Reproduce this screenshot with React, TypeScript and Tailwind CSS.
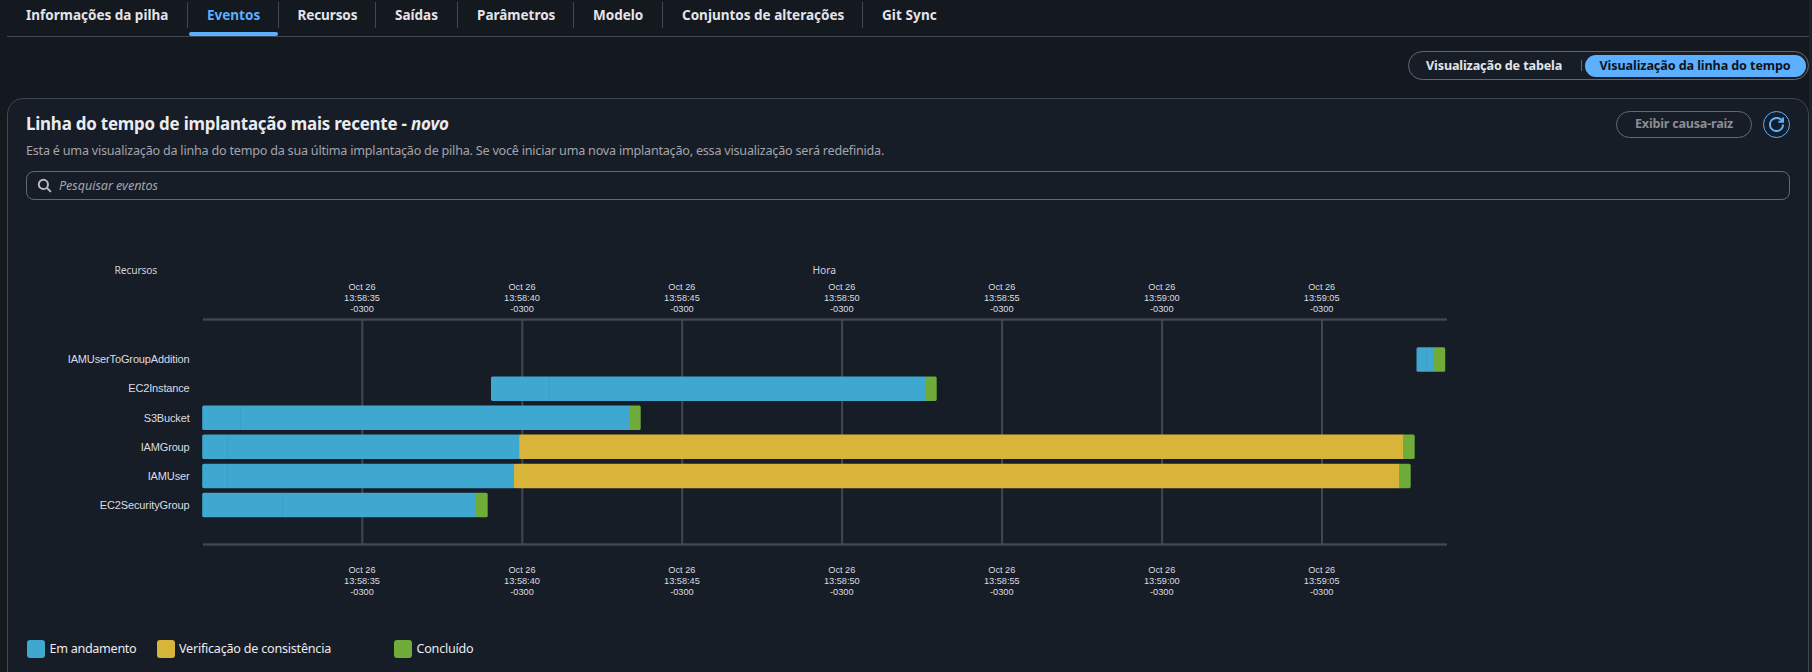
import React from "react";

const BLUE = "#3ea8d0";
const YELLOW = "#d8b538";
const GREEN = "#6fac3a";
const GRID = "#424650";

type Tab = { label: string; width: string; active?: boolean };

const tabs: Tab[] = [
  { label: "Informações da pilha", width: "w-[181px] pl-[19px]" },
  { label: "Eventos", width: "w-[91px] pl-[19px]", active: true },
  { label: "Recursos", width: "w-[97px] pl-[18.5px] tracking-[-0.1px]" },
  { label: "Saídas", width: "w-[82px] pl-[19px]" },
  { label: "Parâmetros", width: "w-[116px] pl-[19px]" },
  { label: "Modelo", width: "w-[89px] pl-[19px]" },
  { label: "Conjuntos de alterações", width: "w-[200px] pl-[19px]" },
  { label: "Git Sync", width: "w-[95px] pl-[19px] tracking-[0.1px]" },
];

const ticks = [
  { x: 362.3, time: "13:58:35" },
  { x: 522.3, time: "13:58:40" },
  { x: 682.2, time: "13:58:45" },
  { x: 842.1, time: "13:58:50" },
  { x: 1002.1, time: "13:58:55" },
  { x: 1162.1, time: "13:59:00" },
  { x: 1322, time: "13:59:05" },
];

type Segment = { from: number; to: number; color: string };
type Row = { name: string; labelWidth: number; split: number; segments: Segment[] };

const rows: Row[] = [
  {
    name: "IAMUserToGroupAddition",
    labelWidth: 122,
    split: 1426,
    segments: [
      { from: 1416.5, to: 1433.5, color: BLUE },
      { from: 1433.5, to: 1445.2, color: GREEN },
    ],
  },
  {
    name: "EC2Instance",
    labelWidth: 61.5,
    split: 549,
    segments: [
      { from: 491, to: 925, color: BLUE },
      { from: 925, to: 936.7, color: GREEN },
    ],
  },
  {
    name: "S3Bucket",
    labelWidth: 46,
    split: 240,
    segments: [
      { from: 202.2, to: 629, color: BLUE },
      { from: 629, to: 640.7, color: GREEN },
    ],
  },
  {
    name: "IAMGroup",
    labelWidth: 49,
    split: 227,
    segments: [
      { from: 202.2, to: 519.3, color: BLUE },
      { from: 519.3, to: 1403, color: YELLOW },
      { from: 1403, to: 1414.7, color: GREEN },
    ],
  },
  {
    name: "IAMUser",
    labelWidth: 42,
    split: 227,
    segments: [
      { from: 202.2, to: 514, color: BLUE },
      { from: 514, to: 1399, color: YELLOW },
      { from: 1399, to: 1410.7, color: GREEN },
    ],
  },
  {
    name: "EC2SecurityGroup",
    labelWidth: 90,
    split: 282,
    segments: [
      { from: 202.2, to: 476, color: BLUE },
      { from: 476, to: 487.7, color: GREEN },
    ],
  },
];

function TickLabel({ x, y, time }: { x: number; y: number; time: string }) {
  return (
    <g textAnchor="middle" fontSize="9.2" fill="#dcdce2">
      <text x={x} y={y}>Oct 26</text>
      <text x={x} y={y + 11}>{time}</text>
      <text x={x} y={y + 21.7}>-0300</text>
    </g>
  );
}

function TimelineChart() {
  return (
    <svg
      viewBox="8 200 1500 421"
      width="1500"
      height="421"
      className="block shrink-0 font-['Liberation_Sans',Arial,sans-serif]"
    >
      <text x="114.5" y="274" fontSize="10.3" fill="#d0d0d6" textLength="42.8" className="font-['Noto_Sans',sans-serif]">
        Recursos
      </text>
      <text x="812.5" y="274" fontSize="10.3" fill="#d0d0d6" textLength="23.5" className="font-['Noto_Sans',sans-serif]">
        Hora
      </text>
      {ticks.map((t) => (
        <g key={t.time}>
          <TickLabel x={t.x - 0.3} y={290} time={t.time} />
          <rect x={t.x - 1} y="320" width="2" height="224" fill={GRID} />
          <TickLabel x={t.x - 0.3} y={573} time={t.time} />
        </g>
      ))}
      <rect x="203" y="318.3" width="1244" height="2.4" fill={GRID} />
      <rect x="203" y="543.3" width="1244" height="2.4" fill={GRID} />
      {rows.map((row, i) => {
        const y = 347.3 + i * 29.1;
        return (
          <g key={row.name}>
            <text
              x={189.7 - row.labelWidth}
              y={363.2 + i * 29.15}
              fontSize="11"
              textLength={row.labelWidth}
              fill="#dcdce2"
            >
              {row.name}
            </text>
            {row.segments.map((s, k) => {
              const overlap = k < row.segments.length - 1 ? 2 : 0;
              return (
                <rect
                  key={k}
                  x={s.from}
                  y={y}
                  width={s.to - s.from + overlap}
                  height="24.5"
                  rx="1.6"
                  fill={s.color}
                />
              );
            })}
            <rect x={row.split} y={y} width="1" height="24.5" fill="#161d26" fillOpacity="0.07" />
          </g>
        );
      })}
    </svg>
  );
}

function SearchIcon() {
  return (
    <svg width="15" height="15" viewBox="0 0 16 16" fill="none" stroke="#b9b9c2" strokeWidth="2.1">
      <circle cx="6.8" cy="6.8" r="4.9" />
      <path d="M10.4 10.4 L14.8 14.8" />
    </svg>
  );
}

function RefreshIcon() {
  return (
    <svg width="15" height="15" viewBox="0 0 16 16" fill="none" stroke="#5cb0ff" strokeWidth="2.1">
      <path d="M10 5h5V0.6" strokeLinejoin="miter" />
      <path d="M15 8a6.95 6.95 0 0 1-7 7 6.95 6.95 0 0 1-7-7 6.95 6.95 0 0 1 7-7 6.87 6.87 0 0 1 6.3 4" />
    </svg>
  );
}

function Legend() {
  return (
    <div className="flex h-[18px] items-center text-[12.6px] leading-[18px] text-[#ebebf0]">
      <span className="h-[18px] w-[18px] rounded-[3px] bg-[#3ea8d0]" />
      <span className="ml-[4.5px] w-[107px] tracking-[-0.3px]">Em andamento</span>
      <span className="h-[18px] w-[18px] rounded-[3px] bg-[#d8b538]" />
      <span className="ml-[4.5px] w-[215px] tracking-[-0.23px]">Verificação de consistência</span>
      <span className="h-[18px] w-[18px] rounded-[3px] bg-[#6fac3a]" />
      <span className="ml-[4.5px] tracking-[-0.23px]">Concluído</span>
    </div>
  );
}

export default function App() {
  return (
    <div className="flex h-[672px] w-[1812px] overflow-hidden bg-[#14181f] font-['Noto_Sans',sans-serif]">
      <div className="flex min-w-0 flex-1 flex-col pl-[7px]">
        <nav className="flex h-[37px] shrink-0 border-b border-[#424650]">
          {tabs.map((tab, i) => (
            <div key={tab.label} className={`relative h-[36px] shrink-0 ${tab.width}`}>
              <span
                className={`block pt-[5px] text-[13.5px] leading-[20px] font-bold whitespace-nowrap ${
                  tab.active ? "text-[#5cb0ff]" : "text-[#e4e4e9]"
                }`}
              >
                {tab.label}
              </span>
              {i < tabs.length - 1 && (
                <span className="absolute top-[2px] right-0 h-[26px] w-px bg-[#424650]" />
              )}
              {tab.active && (
                <span className="absolute top-[32px] left-[1px] h-[4px] w-[89px] rounded-[2px] bg-[#5cb0ff]" />
              )}
            </div>
          ))}
        </nav>

        <div className="mt-[14px] flex shrink-0 justify-end">
          <div className="flex h-[29px] w-[401px] items-center rounded-[15px] border border-[#656871] bg-[#161d26] pr-[2px] text-[12.6px] leading-[20px] font-bold whitespace-nowrap">
            <span className="w-[172px] pl-[17px] tracking-[-0.13px] text-[#e4e4e9]">Visualização de tabela</span>
            <span className="h-[11px] w-px bg-[#656871]" />
            <span className="ml-[3px] flex h-[22px] w-[221px] items-center rounded-full bg-[#5cb0ff] pl-[14.5px] tracking-[-0.1px] text-[#0f141a]">
              Visualização da linha do tempo
            </span>
          </div>
        </div>

        <section className="mt-[18px] h-[620px] shrink-0 rounded-[16px] border border-[#424650] bg-[#161d26]">
          <div className="flex h-[72px] items-start justify-between pr-[18px] pl-[18px]">
            <div>
              <h2 className="mt-[13px] text-[16.9px] leading-[24px] font-bold tracking-[-0.2px] text-[#ebebf0]">
                Linha do tempo de implantação mais recente - <i className="tracking-[-0.1px]">novo</i>
              </h2>
              <p className="mt-[5px] text-[12.6px] leading-[20px] tracking-[-0.22px] text-[#a4a4ad]">
                Esta é uma visualização da linha do tempo da sua última implantação de pilha. Se você iniciar uma nova
                implantação, essa visualização será redefinida.
              </p>
            </div>
            <div className="mt-[12px] flex gap-[11px]">
              <button className="flex h-[27px] w-[136px] items-center justify-center rounded-full border border-[#656871] pb-[1px] text-[12.6px] font-bold tracking-[-0.22px] text-[#8c8c94]">
                Exibir causa-raiz
              </button>
              <button className="flex h-[27px] w-[27px] items-center justify-center rounded-full border border-[#5cb0ff]">
                <RefreshIcon />
              </button>
            </div>
          </div>

          <div className="mx-[18px] flex h-[29px] items-center rounded-[8px] border border-[#656871] pl-[10px]">
            <SearchIcon />
            <span className="ml-[7px] text-[12.6px] leading-[20px] tracking-[-0.05px] text-[#a4a4ad] italic">
              Pesquisar eventos
            </span>
          </div>

          <TimelineChart />

          <div className="mt-[19px] pl-[19px]">
            <Legend />
          </div>
        </section>
      </div>
      <div className="w-[3px] shrink-0 bg-[#202124]" />
    </div>
  );
}
